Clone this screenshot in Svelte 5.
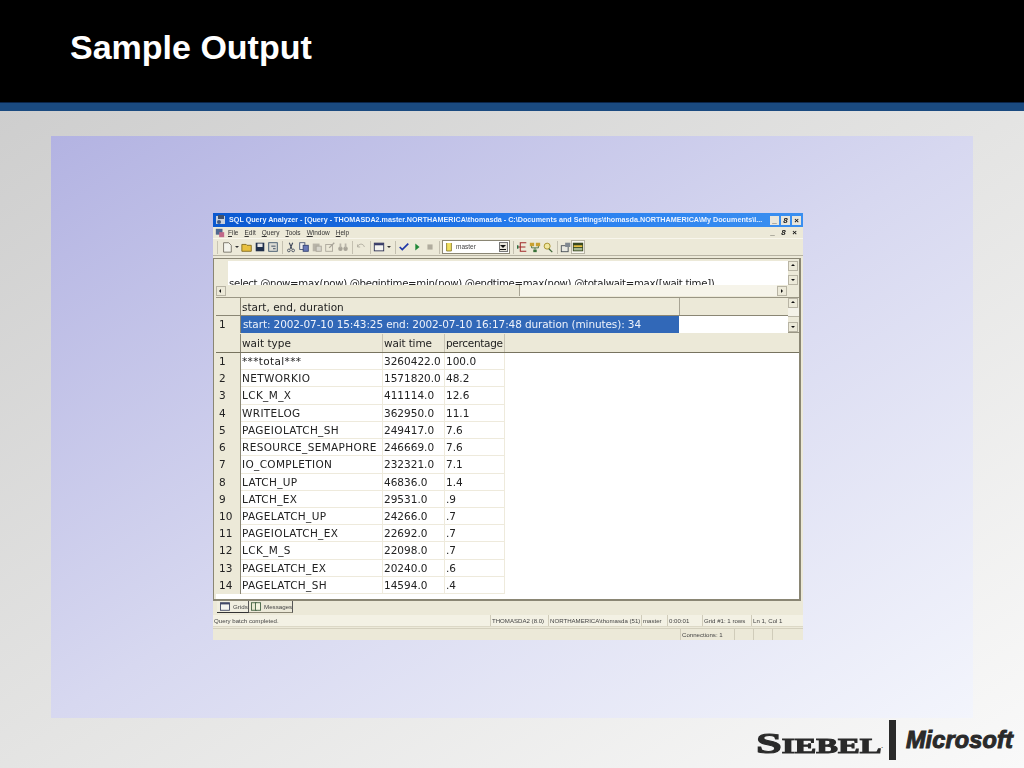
<script>
  const menus = [['F','ile'],['E','dit'],['Q','uery'],['T','ools'],['W','indow'],['H','elp']];
  const rows = [
    ['***total***','3260422.0','100.0'],['NETWORKIO','1571820.0','48.2'],['LCK_M_X','411114.0','12.6'],
    ['WRITELOG','362950.0','11.1'],['PAGEIOLATCH_SH','249417.0','7.6'],['RESOURCE_SEMAPHORE','246669.0','7.6'],
    ['IO_COMPLETION','232321.0','7.1'],['LATCH_UP','46836.0','1.4'],['LATCH_EX','29531.0','.9'],
    ['PAGELATCH_UP','24266.0','.7'],['PAGEIOLATCH_EX','22692.0','.7'],['LCK_M_S','22098.0','.7'],
    ['PAGELATCH_EX','20240.0','.6'],['PAGELATCH_SH','14594.0','.4']
  ];
  const status = [
    ['THOMASDA2 (8.0)',58],['NORTHAMERICA\\thomasda (51)',93],['master',26],['0:00:01',35],['Grid #1: 1 rows',49],['Ln 1, Col 1',50]
  ];
</script>

<div class="slide">
  <header class="head"><h1>Sample Output</h1></header>
  <div class="rule"></div>
  <main class="body">
    <section class="panel">
      <div class="win">
        <div class="title">
          <svg class="ico" viewBox="0 0 12 12"><rect x="1" y="2" width="9" height="8" fill="#c8d0dc"/><rect x="3" y="1" width="6" height="4" fill="#40506c"/><circle cx="4" cy="8" r="2" fill="#405880"/></svg>
          <span class="title-text">SQL Query Analyzer - [Query - THOMASDA2.master.NORTHAMERICA\thomasda - C:\Documents and Settings\thomasda.NORTHAMERICA\My Documents\I...</span>
          <span class="caps"><b>_</b><b><i>8</i></b><b>×</b></span>
        </div>
        <div class="menu">
          <svg class="ico mico" viewBox="0 0 12 12"><rect x="1" y="1" width="8" height="7" fill="#506890"/><rect x="5" y="5" width="6" height="6" fill="#c06888"/></svg>
          {#each menus as m}<span class="mi"><u>{m[0]}</u>{m[1]}</span>{/each}
          <span class="mdi"><b>_</b><b><i>8</i></b><b>×</b></span>
        </div>
        <div class="tools">
          <span class="grip"></span>
          <svg class="t" viewBox="0 0 14 14"><path d="M3 2h6l3 3v8H3z" fill="#f4f4ec" stroke="#706c60"/></svg>
          <span class="dd"></span>
          <svg class="t" viewBox="0 0 14 14"><path d="M1 4h5l1 1h5v7H1z" fill="#e8c040" stroke="#806818"/></svg>
          <svg class="t" viewBox="0 0 14 14"><rect x="2" y="2" width="10" height="10" fill="#20304c"/><rect x="4" y="3" width="6" height="4" fill="#e8e8e8"/></svg>
          <svg class="t" viewBox="0 0 14 14"><rect x="2" y="2" width="10" height="10" fill="#dcdcd4" stroke="#385068"/><path d="M5 6h5M7 9h3" stroke="#283850"/></svg>
          <span class="sep"></span>
          <svg class="t" viewBox="0 0 14 14"><path d="M5 2l3 7M9 2L6 9" stroke="#404858" stroke-width="1.3" fill="none"/><circle cx="4.5" cy="11" r="1.6" fill="none" stroke="#404858"/><circle cx="9.5" cy="11" r="1.6" fill="none" stroke="#404858"/></svg>
          <svg class="t" viewBox="0 0 14 14"><rect x="2" y="2" width="6" height="8" fill="#f0f0f0" stroke="#405070"/><rect x="6" y="5" width="6" height="7" fill="#6878b8" stroke="#304070"/></svg>
          <svg class="t" viewBox="0 0 14 14"><rect x="2" y="3" width="8" height="9" fill="#b8b4a8"/><rect x="6" y="6" width="6" height="6" fill="#d8d6cc" stroke="#a8a498"/></svg>
          <svg class="t" viewBox="0 0 14 14"><rect x="2" y="4" width="8" height="8" fill="none" stroke="#a8a498"/><path d="M6 8l6-6" stroke="#a8a498" stroke-width="1.5"/></svg>
          <svg class="t" viewBox="0 0 14 14"><circle cx="4" cy="9" r="2.6" fill="#a8a498"/><circle cx="10" cy="9" r="2.6" fill="#a8a498"/><path d="M3 3h2v5H3zM9 3h2v5H9z" fill="#b8b4a8"/></svg>
          <span class="sep"></span>
          <svg class="t" viewBox="0 0 14 14"><path d="M3 7a4 4 0 0 1 7-2l1 2M3 4v3h3" fill="none" stroke="#b0ac9e"/></svg>
          <span class="sep"></span>
          <svg class="t" viewBox="0 0 14 14"><rect x="1.500" y="2.500" width="11" height="9" fill="#f4f4f0" stroke="#282c50"/><rect x="1.500" y="2.500" width="11" height="2.500" fill="#383c68"/></svg>
          <span class="dd"></span>
          <span class="sep"></span>
          <svg class="t" viewBox="0 0 14 14"><path d="M2 7l3 3 7-7" fill="none" stroke="#2038a8" stroke-width="2"/></svg>
          <svg class="t" viewBox="0 0 14 14"><path d="M5 3l5 4-5 4z" fill="#208838"/></svg>
          <svg class="t" viewBox="0 0 14 14"><rect x="4" y="4" width="6" height="6" fill="#b0ac9e"/></svg>
          <span class="sep"></span>
          <span class="combo">
            <svg class="dbi" viewBox="0 0 10 12"><path d="M2 1v10h6V1" fill="#f0e060" stroke="#807020"/></svg>
            <span class="combo-text">master</span>
            <span class="combo-btn"></span>
          </span>
          <span class="sep"></span>
          <svg class="t" viewBox="0 0 14 14"><path d="M12 2H5v10h7M2 7h9" fill="none" stroke="#a02828" stroke-width="1.2"/><path d="M2 5v4" stroke="#206838" stroke-width="1.500"/></svg>
          <svg class="t" viewBox="0 0 14 14"><path d="M1 2h5v4H1zM8 2h5v4H8z" fill="#c8a030"/><path d="M3 6v2h8V6M7 8v2" stroke="#406838" fill="none"/><rect x="5" y="10" width="4" height="3" fill="#387038"/></svg>
          <svg class="t" viewBox="0 0 14 14"><circle cx="6" cy="6" r="3.500" fill="#f0e8a0" stroke="#a08820"/><path d="M8 9l4 4" stroke="#406838" stroke-width="1.500"/></svg>
          <span class="sep"></span>
          <svg class="t" viewBox="0 0 14 14"><rect x="1.500" y="5.500" width="8" height="7" fill="#e8e8e0" stroke="#404850"/><rect x="6" y="2" width="6" height="5" fill="#808890"/></svg>
          <span class="active"><svg class="t" viewBox="0 0 14 14"><rect x="1" y="2" width="12" height="10" fill="#384820"/><rect x="2" y="5" width="10" height="2" fill="#e8c040"/><rect x="2" y="8" width="10" height="3" fill="#a8b890"/></svg></span>
        </div>

        <div class="work">
          <div class="query">
            <div class="editor">
              <div class="code">select  @now=max(now)  @begintime=min(now)  @endtime=max(now)  @totalwait=max([wait time])</div>
              <div class="vs"><span class="ar up"></span><span class="track"></span><span class="ar down"></span></div>
            </div>
            <div class="hs">
              <span class="ar left"></span><span class="thumb"></span><span class="hgap"></span><span class="ar right"></span><span class="corner"></span>
            </div>
          </div>

          <div class="g1">
            <div class="g1-main">
              <div class="g-row h1">
                <span class="num"></span><span class="cw">start, end, duration</span><span class="ce"></span>
              </div>
              <div class="g-row r1">
                <span class="num">1</span><span class="cw sel">start: 2002-07-10 15:43:25 end: 2002-07-10 16:17:48 duration (minutes): 34</span><span class="ce white"></span>
              </div>
            </div>
            <div class="vs2"><span class="ar up"></span><span class="thumb2"></span><span class="track"></span><span class="ar down"></span></div>
          </div>

          <div class="g2">
            <div class="cols hd">
              <span class="num"></span><span class="c1">wait type</span><span class="c2">wait time</span><span class="c3">percentage</span><span class="rest"></span>
            </div>
            {#each rows as r, i}
              <div class="cols row">
                <span class="num">{i + 1}</span><span class="c1">{r[0]}</span><span class="c2">{r[1]}</span><span class="c3">{r[2]}</span>
              </div>
            {/each}
          </div>
        </div>

        <div class="tabs">
          <span class="tab on">
            <svg class="ti" viewBox="0 0 12 10"><rect x="0.500" y="0.500" width="11" height="9" fill="#f4f4f0" stroke="#303858"/><rect x="0.500" y="0.500" width="11" height="2" fill="#404868"/></svg>
            Grids
          </span>
          <span class="tab msg">
            <svg class="ti" viewBox="0 0 12 10"><rect x="0.500" y="0.500" width="6" height="9" fill="#e8e8d0" stroke="#385838"/><rect x="5.500" y="0.500" width="6" height="9" fill="#f4f4e0" stroke="#385838"/></svg>
            Messages
          </span>
        </div>
        <div class="st1">
          <span class="st-main">Query batch completed.</span>
          {#each status as s}<span class="st" style="width:{s[1]}px">{s[0]}</span>{/each}
        </div>
        <div class="st2">
          <span class="st-main"></span>
          <span class="st conn">Connections: 1</span><span class="st e1"></span><span class="st e2"></span><span class="st e3"></span>
        </div>
      </div>
    </section>
    <footer class="logos">
      <span class="siebel"><span class="sbl"><span class="big">S</span>IEBEL</span></span><span class="dot">.</span>
      <span class="bar"></span>
      <span class="ms">Microsoft</span>
    </footer>
  </main>
</div>

<style>
  :global(body) { margin: 0; }
  .slide { width: 1024px; height: 768px; overflow: hidden; display: flex; flex-direction: column; font-family: "Liberation Sans", Arial, sans-serif; }
  .head { height: 102px; background: #000; flex: none; }
  h1 { margin: 0; padding: 26px 0 0 70px; color: #fff; font-size: 34px; line-height: 42px; font-weight: 700; }
  .rule { height: 9px; background: #1a4a80; border-top: 1px solid #0a2448; box-sizing: border-box; flex: none; }
  .body { flex: 1; background: linear-gradient(to bottom right, #cecece 0%, #e4e4e3 50%, #f9f9f9 100%); padding: 25px 51px 0; display: flex; flex-direction: column; }
  .panel { width: 922px; height: 582px; flex: none; background: linear-gradient(to bottom right, #b3b3e2 0%, #d7d8f0 50%, #f3f5fc 100%); padding: 77px 0 0 162px; box-sizing: border-box; }

  .win { width: 590px; height: 427px; background: #ece9d8; font-family: "Open Sans", "Liberation Sans", sans-serif; display: flex; flex-direction: column; filter: blur(0.35px); color: #222; }
  .ico { width: 12px; height: 12px; flex: none; }
  .mico { width: 10px; height: 10px; }
  .title { height: 14px; flex: none; display: flex; align-items: center; gap: 2px; padding: 0 2px; background: linear-gradient(90deg, #0a58d0, #2a80f0 60%, #3a8ff0); color: #eaf2ff; box-sizing: border-box; }
  .title-text { font: 700 7.200px/14px "Liberation Sans", sans-serif; white-space: nowrap; overflow: hidden; flex: 1; }
  .caps, .mdi { display: flex; gap: 2px; flex: none; }
  .caps b, .mdi b { width: 9px; height: 9px; background: #e8e6dc; color: #111; font: 700 8px/9px "Liberation Sans", sans-serif; text-align: center; display: block; }
  .mdi b { background: transparent; }
  .menu { height: 11px; flex: none; display: flex; align-items: center; gap: 6px; padding: 0 4px 0 2px; font: 6.500px/11px "Liberation Sans", sans-serif; color: #333; }
  .mico + .mi { margin-left: -3px; }
  .mi u { text-decoration: underline; }
  .mdi { margin-left: auto; }
  .tools { height: 18px; flex: none; display: flex; align-items: center; padding-left: 4px; gap: 1px; border-top: 1px solid #f8f6ec; border-bottom: 1px solid #b8b4a4; box-sizing: border-box; margin-bottom: 2px; }
  .grip { width: 1px; height: 13px; background: #c8c4b4; margin-right: 2px; }
  .t { width: 12px; height: 12px; flex: none; }
  .dd { width: 0; height: 0; border: 2px solid transparent; border-top: 2px solid #333; margin: 2px 1px 0; flex: none; }
  .sep { width: 1px; height: 13px; background: #c4c0b0; margin: 0 1.500px; flex: none; }
  .combo { width: 68px; height: 14px; background: #fff; border: 1px solid #8a8674; box-sizing: border-box; display: flex; align-items: center; flex: none; padding-left: 2px; gap: 3px; }
  .dbi { width: 8px; height: 10px; }
  .combo-text { font: 6.500px/12px "Liberation Sans", sans-serif; color: #444; flex: 1; }
  .combo-btn { width: 9px; height: 10px; background: #e8e6dc; border: 1px solid #777; box-sizing: border-box; margin-right: 1px; position: relative; }
  .combo-btn::before { content: ""; position: absolute; left: 0; top: 2px; border: 3px solid transparent; border-bottom: 0; border-top-color: #111; }
  .combo-btn::after { content: ""; position: absolute; left: 0; top: 6px; width: 6px; height: 1px; background: #111; }
  .active { background: #f8f6ee; border: 1px solid #b8b4a4; box-sizing: border-box; display: flex; margin-left: -2px; }

  .work { height: 343px; flex: none; margin-right: 2px; border: 1px solid #8a8674; border-right-width: 2px; border-bottom-width: 2px; box-sizing: border-box; padding: 2px 0 0 2px; background: #ece9d8; display: flex; flex-direction: column; }
  .query { height: 35px; flex: none; display: flex; flex-direction: column; }
  .editor { height: 24px; display: flex; background: #fff; margin-left: 12px; }
  .code { flex: 1; overflow: hidden; white-space: nowrap; font: 10.200px/14px "DejaVu Sans", sans-serif; letter-spacing: -0.33px; padding: 16px 0 0 1px; color: #222; box-sizing: border-box; }
  .vs { width: 11px; flex: none; display: flex; flex-direction: column; background: #ece9d8; }
  .track { flex: 1; }
  .ar { width: 10px; height: 10px; background: #ece9d8; border: 1px solid #b8b4a4; box-sizing: border-box; flex: none; position: relative; display: block; }
  .ar::after { content: ""; position: absolute; left: 2px; top: 2px; border: 2px solid transparent; }
  .up::after { border-bottom-color: #111; top: 0; }
  .down::after { border-top-color: #111; top: 3px; }
  .left::after { border-right-color: #111; left: 0; }
  .right::after { border-left-color: #111; left: 3px; }
  .hs { height: 11px; display: flex; align-items: center; flex: none; }
  .thumb { width: 294px; flex: none; height: 11px; background: #ece9d8; border-right: 1px solid #a8a494; box-sizing: border-box; }
  .hgap { flex: 1; background: #f6f4ea; height: 11px; }
  .corner { width: 12px; flex: none; }

  .g1 { height: 36px; flex: none; display: flex; border-top: 1px solid #9a9684; border-bottom: 1px solid #9a9684; box-sizing: border-box; margin-top: 1px; }
  .g1-main { flex: 1; display: flex; flex-direction: column; }
  .g-row { display: flex; flex: none; height: 17px; font: 10.500px/17px "DejaVu Sans", sans-serif; }
  .num { width: 25px; flex: none; padding-left: 3px; box-sizing: border-box; background: #ece9d8; border-right: 1px solid #8a8674; }
  .cw { width: 438px; padding-left: 1px; box-sizing: border-box; flex: none; white-space: nowrap; overflow: hidden; }
  .h1 { border-bottom: 1px solid #8a8674; box-sizing: content-box; line-height: 18px; }
  .ce { flex: 1; border-left: 1px solid #a8a494; }
  .sel { background: #3168b8; color: #eef2fa; padding-left: 2px; letter-spacing: -0.11px; }
  .white { background: #fff; border: 0; }
  .vs2 { width: 11px; flex: none; display: flex; flex-direction: column; }
  .thumb2 { height: 8px; background: #f4f2e8; border-bottom: 1px solid #b8b4a4; flex: none; }

  .g2 { flex: 1; background: #fff; margin-top: 1px; font: 10.500px/17.230px "DejaVu Sans", sans-serif; overflow: hidden; }
  .cols { display: grid; grid-template-columns: 25px 142px 62px 60px 1fr; }
  .hd { background: #ece9d8; height: 19px; line-height: 18px; border-bottom: 1px solid #77735f; box-sizing: border-box; }
  .hd .c1, .hd .c2, .hd .c3 { padding-left: 1px; border-right: 1px solid #c8c4b4; }
  .hd .c2 { letter-spacing: -0.15px; }
  .hd .c3 { letter-spacing: -0.3px; }
  .row { height: 17.230px; }
  .row .c1, .row .c2, .row .c3 { border-right: 1px solid #eeeadc; border-bottom: 1px solid #eeeadc; box-sizing: border-box; padding-left: 1px; white-space: nowrap; }
  .row .c1 { letter-spacing: 0.35px; }
  .c1, .c2, .c3 { overflow: hidden; white-space: nowrap; }

  .tabs { height: 14px; flex: none; display: flex; padding-left: 4px; align-items: flex-start; font: 6.200px/12px "Liberation Sans", sans-serif; color: #444; }
  .tab { display: flex; align-items: center; gap: 3px; height: 12px; padding: 0 0 0 3px; border-right: 1px solid #555; border-bottom: 1px solid #8a8674; width: 32px; box-sizing: border-box; white-space: nowrap; overflow: hidden; }
  .tab.on { border-bottom: 1px solid #333; background: #f0eee0; }
  .tab.msg { width: 44px; padding-left: 2px; }
  .ti { width: 10px; height: 9px; flex: none; }
  .st1, .st2 { flex: none; display: flex; font: 6.100px/11px "Liberation Sans", sans-serif; color: #444; }
  .st1 { height: 12px; padding-right: 2px; background: #f3f1e4; border-bottom: 1px solid #dcd8c6; box-sizing: border-box; }
  .st2 { height: 12px; line-height: 11px; margin-top: 1px; border-top: 1px solid #d4d0be; box-sizing: border-box; padding-right: 1px; }
  .st-main { flex: 1; padding-left: 1px; white-space: nowrap; }
  .st { border-left: 1px solid #d0ccba; padding-left: 1px; box-sizing: border-box; white-space: nowrap; overflow: hidden; flex: none; }
  .conn { width: 54px; }
  .e1 { width: 19px; }
  .e2 { width: 19px; }
  .e3 { width: 30px; }

  .logos { flex: 1; display: flex; align-items: center; justify-content: flex-end; margin-right: -40px; padding-bottom: 6px; color: #2a2a2a; }
  .siebel { width: 124px; height: 30px; margin-top: 6px; flex: none; display: block; white-space: nowrap; }
  .sbl { display: inline-block; font: 700 21px/30px "Liberation Serif", serif; -webkit-text-stroke: 1px #2a2a2a; transform: scaleX(1.55); transform-origin: left center; }
  .big { font-size: 30px; line-height: 30px; }
  .dot { font: 700 6px/6px "Liberation Sans", sans-serif; margin: 12px 6px 0 1px; }
  .bar { width: 7px; height: 40px; background: #2a2a2a; margin-right: 10px; flex: none; }
  .ms { font: italic 900 23.500px/26px "Liberation Sans", sans-serif; -webkit-text-stroke: 1px #2a2a2a; letter-spacing: 0.15px; }
</style>
